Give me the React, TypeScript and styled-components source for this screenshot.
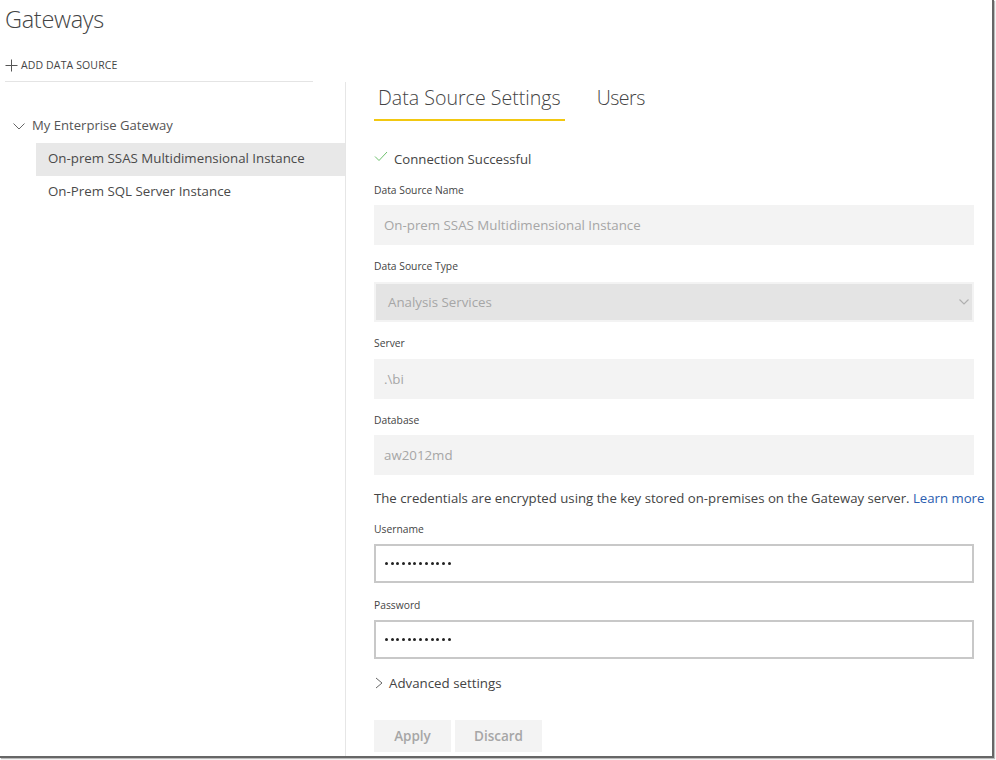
import React from 'react';
import styled, { createGlobalStyle } from 'styled-components';

const GlobalStyle = createGlobalStyle`
  html, body {
    margin: 0;
    padding: 0;
    background: #fff;
  }
  body {
    font-family: "Open Sans", "Noto Sans", sans-serif;
    color: #444;
  }
`;

const Screen = styled.div`
  width: 996px;
  height: 760px;
  box-sizing: border-box;
  overflow: hidden;
`;

const Frame = styled.div`
  width: 994px;
  height: 758px;
  box-sizing: border-box;
  background: #fff;
  border-right: 2px solid #666;
  border-bottom: 2px solid #666;
  box-shadow: 1px 1px 1px #bbb;
  overflow: hidden;
`;

const Header = styled.header`
  height: 82px;
  box-sizing: border-box;
  width: 308px;
  margin-left: 5px;
  border-bottom: 1px solid #e4e4e4;
`;

const Title = styled.h1`
  margin: 0;
  padding-top: 3px;
  height: 46px;
  box-sizing: border-box;
  font-size: 23.5px;
  line-height: 32px;
  font-weight: 300;
  color: #444;
  letter-spacing: -0.3px;
`;

const AddButton = styled.div`
  display: flex;
  align-items: center;
  gap: 3px;
  height: 38px;
  font-size: 10.5px;
  letter-spacing: 0.13px;
  color: #444;
`;

const Body = styled.div`
  display: flex;
  height: 675px;
`;

const Sidebar = styled.nav`
  width: 346px;
  flex-shrink: 0;
  box-sizing: border-box;
  border-right: 1px solid #e6e6e6;
  padding-top: 28px;
`;

const TreeRoot = styled.div`
  display: flex;
  align-items: center;
  gap: 7px;
  height: 33px;
  box-sizing: border-box;
  padding: 0 0 3px 13px;
  font-size: 13.1px;
  color: #555;
`;

const TreeItem = styled.div<{ $selected?: boolean }>`
  display: flex;
  align-items: center;
  height: 33px;
  box-sizing: border-box;
  margin-left: 36px;
  padding: 0 0 3px 12px;
  font-size: 13.3px;
  color: #4a4a4a;
  background: ${p => (p.$selected ? '#e8e8e8' : 'transparent')};
`;

const Panel = styled.main`
  width: 600px;
  margin-left: 28px;
`;

const Tabs = styled.div`
  display: flex;
  gap: 28px;
  height: 39px;
`;

const Tab = styled.div<{ $active?: boolean }>`
  box-sizing: border-box;
  height: 39px;
  padding: 0 4px;
  font-size: 19.6px;
  line-height: 32px;
  font-weight: 300;
  color: #444;
  letter-spacing: ${p => (p.$active ? '0' : '-0.5px')};
  border-bottom: ${p => (p.$active ? '2px solid #f2c811' : '2px solid transparent')};
`;

const Status = styled.div`
  display: flex;
  align-items: center;
  gap: 6px;
  height: 20px;
  margin-top: 28px;
  font-size: 13.2px;
  color: #444;
`;

const CheckIcon = styled.svg`
  margin-bottom: 5px;
`;

const Label = styled.div<{ $top: number }>`
  margin-top: ${p => p.$top}px;
  height: 16px;
  font-size: 10.3px;
  line-height: 16px;
  color: #444;
`;

const ReadOnlyField = styled.div<{ $gap?: number }>`
  box-sizing: border-box;
  height: 40px;
  margin-top: ${p => p.$gap ?? 7}px;
  padding-left: 10px;
  display: flex;
  align-items: center;
  background: #f3f3f3;
  font-size: 13.3px;
  color: #a6a6a6;
`;

const SelectField = styled(ReadOnlyField)`
  justify-content: space-between;
  padding: 0 3px 0 12px;
  background: #e4e4e4;
  border: 2px solid #f3f3f3;
`;

const Note = styled.div`
  margin-top: 13px;
  height: 20px;
  font-size: 13.2px;
  line-height: 20px;
  white-space: nowrap;
  color: #444;
`;

const LearnMore = styled.a`
  color: #2a5db0;
  text-decoration: none;
`;

const PasswordField = styled.div`
  box-sizing: border-box;
  height: 39px;
  margin-top: 7px;
  padding-left: 9px;
  display: flex;
  align-items: center;
  gap: 2.7px;
  background: #fff;
  border: 2px solid #c8c8c8;
`;

const Dot = styled.span`
  width: 3px;
  height: 3px;
  border-radius: 50%;
  background: #222;
`;

const Advanced = styled.div`
  display: flex;
  align-items: center;
  gap: 5px;
  height: 20px;
  margin-top: 14px;
  font-size: 13.3px;
  color: #444;
`;

const Actions = styled.div`
  display: flex;
  gap: 4px;
  margin-top: 27px;
`;

const ActionButton = styled.div<{ $width: number }>`
  width: ${p => p.$width}px;
  height: 32px;
  display: flex;
  align-items: center;
  justify-content: center;
  background: #f3f3f3;
  font-size: 13.5px;
  font-weight: 600;
  color: #a6a6a6;
`;

const Password = () => (
  <PasswordField>
    {Array.from({ length: 12 }).map((_, i) => (
      <Dot key={i} />
    ))}
  </PasswordField>
);

const App: React.FC = () => {
  return (
    <Screen>
      <GlobalStyle />
      <Frame>
        <Header>
          <Title>Gateways</Title>
          <AddButton>
            <svg width="13" height="13" viewBox="0 0 13 13" fill="none" stroke="#555" strokeWidth="1">
              <path d="M6.5 0.5v12M0.5 6.5h12" />
            </svg>
            ADD DATA SOURCE
          </AddButton>
        </Header>
        <Body>
          <Sidebar>
            <TreeRoot>
              <svg width="12" height="12" viewBox="0 0 12 12" fill="none" stroke="#666" strokeWidth="1">
                <path d="M0.5 4.5L6 10l5.500-5.500" />
              </svg>
              My Enterprise Gateway
            </TreeRoot>
            <TreeItem $selected>On-prem SSAS Multidimensional Instance</TreeItem>
            <TreeItem>On-Prem SQL Server Instance</TreeItem>
          </Sidebar>
          <Panel>
            <Tabs>
              <Tab $active>Data Source Settings</Tab>
              <Tab>Users</Tab>
            </Tabs>
            <Status>
              <CheckIcon width="14" height="11" viewBox="0 0 14 11" fill="none" stroke="#6cc06c" strokeWidth="1">
                <path d="M1 5.500l4 4L13 1" />
              </CheckIcon>
              Connection Successful
            </Status>
            <Label $top={13}>Data Source Name</Label>
            <ReadOnlyField>On-prem SSAS Multidimensional Instance</ReadOnlyField>
            <Label $top={13}>Data Source Type</Label>
            <SelectField $gap={8}>
              Analysis Services
              <svg width="10" height="6" viewBox="0 0 10 6" fill="none" stroke="#b0b0b0" strokeWidth="1.2">
                <path d="M0.5 0.500L5 5l4.500-4.500" />
              </svg>
            </SelectField>
            <Label $top={13}>Server</Label>
            <ReadOnlyField $gap={8}>.\bi</ReadOnlyField>
            <Label $top={13}>Database</Label>
            <ReadOnlyField>aw2012md</ReadOnlyField>
            <Note>
              The credentials are encrypted using the key stored on-premises on the Gateway server.{' '}
              <LearnMore>Learn more</LearnMore>
            </Note>
            <Label $top={13}>Username</Label>
            <Password />
            <Label $top={14}>Password</Label>
            <Password />
            <Advanced>
              <svg width="10" height="12" viewBox="0 0 10 12" fill="none" stroke="#666" strokeWidth="1">
                <path d="M2 1l6 5-6 5" />
              </svg>
              Advanced settings
            </Advanced>
            <Actions>
              <ActionButton $width={77}>Apply</ActionButton>
              <ActionButton $width={87}>Discard</ActionButton>
            </Actions>
          </Panel>
        </Body>
      </Frame>
    </Screen>
  );
};

export default App;
